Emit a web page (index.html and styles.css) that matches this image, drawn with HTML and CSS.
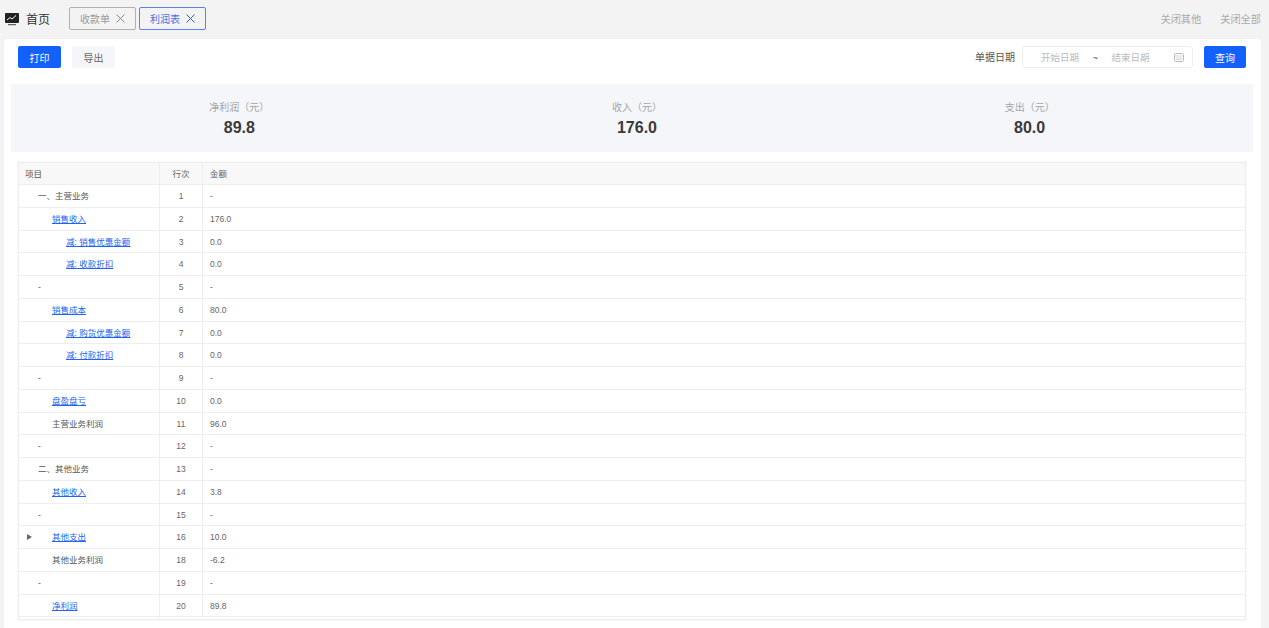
FILE: index.html
```html
<!DOCTYPE html>
<html lang="zh-CN">
  <head>
    <meta charset="UTF-8" />
    <title>利润表</title>
    <link rel="stylesheet" href="styles.css">
  </head>
  <body>
    <header class="tabs">
      <svg class="home-icon" width="14" height="14" viewBox="0 0 14 14">
        <rect x="0" y="1" width="14" height="10" rx="1" fill="#222" />
        <path d="M2 8 L5 5.5 L7 7 L11 3.5" fill="none" stroke="#fff" stroke-width="1" />
        <rect x="3" y="12.2" width="8" height="1" fill="#444" />
      </svg>
      <span class="home-title">首页</span>
      <div class="tab">收款单
        <svg class="tab-x" width="9" height="9" viewBox="0 0 9 9"><path d="M0.5 0.5 L8.5 8.5 M8.5 0.5 L0.5 8.5" /></svg>
      </div>
      <div class="tab on">利润表
        <svg class="tab-x" width="9" height="9" viewBox="0 0 9 9"><path d="M0.5 0.5 L8.5 8.5 M8.5 0.5 L0.5 8.5" /></svg>
      </div>
      <div class="tabs-right">
        <span>关闭其他</span>
        <span>关闭全部</span>
      </div>
    </header>

    <main class="card">
      <div class="toolbar">
        <button class="btn primary">打印</button>
        <button class="btn">导出</button>
        <label class="date-label">单据日期</label>
        <div class="date-range">
          <span>开始日期</span>
          <span class="tilde">~</span>
          <span>结束日期</span>
          <svg class="cal" width="10" height="10" viewBox="0 0 10 10">
            <rect x="0.5" y="1.5" width="9" height="8" rx="1" fill="none" stroke="#bbb" />
            <path d="M0.5 4 H9.5 M2 6 H8 M2 7.7 H8" stroke="#ccc" stroke-width="0.8" />
          </svg>
        </div>
        <button class="btn primary search">查询</button>
      </div>

      <section class="stats">
        <div class="stat"><p>净利润（元）</p><b>89.8</b></div>
        <div class="stat"><p>收入（元）</p><b>176.0</b></div>
        <div class="stat"><p>支出（元）</p><b>80.0</b></div>
      </section>

      <div class="table-wrap">
        <div class="grid head">
          <div>项目</div><div class="c">行次</div><div>金额</div>
        </div>
        <div class="grid"><div class="l1">一、主营业务</div><div class="c">1</div><div>-</div></div>
        <div class="grid"><div class="l2"><a href="#">销售收入</a></div><div class="c">2</div><div>176.0</div></div>
        <div class="grid"><div class="l3"><a href="#">减: 销售优惠金额</a></div><div class="c">3</div><div>0.0</div></div>
        <div class="grid"><div class="l3"><a href="#">减: 收款折扣</a></div><div class="c">4</div><div>0.0</div></div>
        <div class="grid"><div class="l1">-</div><div class="c">5</div><div>-</div></div>
        <div class="grid"><div class="l2"><a href="#">销售成本</a></div><div class="c">6</div><div>80.0</div></div>
        <div class="grid"><div class="l3"><a href="#">减: 购货优惠金额</a></div><div class="c">7</div><div>0.0</div></div>
        <div class="grid"><div class="l3"><a href="#">减: 付款折扣</a></div><div class="c">8</div><div>0.0</div></div>
        <div class="grid"><div class="l1">-</div><div class="c">9</div><div>-</div></div>
        <div class="grid"><div class="l2"><a href="#">盘盈盘亏</a></div><div class="c">10</div><div>0.0</div></div>
        <div class="grid"><div class="l2">主营业务利润</div><div class="c">11</div><div>96.0</div></div>
        <div class="grid"><div class="l1">-</div><div class="c">12</div><div>-</div></div>
        <div class="grid"><div class="l1">二、其他业务</div><div class="c">13</div><div>-</div></div>
        <div class="grid"><div class="l2"><a href="#">其他收入</a></div><div class="c">14</div><div>3.8</div></div>
        <div class="grid"><div class="l1">-</div><div class="c">15</div><div>-</div></div>
        <div class="grid"><div class="l2 has-arrow"><i class="arrow"></i><a href="#">其他支出</a></div><div class="c">16</div><div>10.0</div></div>
        <div class="grid"><div class="l2">其他业务利润</div><div class="c">18</div><div>-6.2</div></div>
        <div class="grid"><div class="l1">-</div><div class="c">19</div><div>-</div></div>
        <div class="grid"><div class="l2"><a href="#">净利润</a></div><div class="c">20</div><div>89.8</div></div>
      </div>
    </main>
  </body>
</html>
```

FILE: styles.css
```css
* {
  margin: 0;
  padding: 0;
  box-sizing: border-box;
}
html,
body {
  height: 628px;
  overflow: hidden;
}
body {
  background: #f3f3f3;
  font-family: "Liberation Sans", "Noto Sans CJK SC", sans-serif;
  font-size: 8.5px;
  color: #555;
}
.tabs {
  height: 39px;
  display: flex;
  align-items: center;
  padding: 0 8px 2px 5px;
}
.home-icon {
  flex: none;
}
.home-title {
  margin-left: 7px;
  margin-right: 20px;
  font-size: 12px;
  color: #333;
}
.tab {
  height: 23px;
  width: 67px;
  margin-right: 3px;
  margin-left: -1px;
  display: flex;
  align-items: center;
  justify-content: space-between;
  padding: 0 10px;
  border: 1px solid #b0b0b0;
  border-radius: 2px;
  font-size: 10px;
  color: #999;
}
.tab + .tab {
  margin-left: 0;
}
.tab.on {
  border-color: #5b82ec;
  color: #4a6fe0;
}
.tab-x {
  fill: none;
  stroke: #888;
  stroke-width: 1;
}
.tab.on .tab-x {
  stroke: #2f5fd8;
}
.tabs-right {
  margin-left: auto;
  display: flex;
  gap: 19px;
  padding-bottom: 1px;
  font-size: 10.2px;
  color: #aaa;
}
.card {
  margin: 0 8px 0 4px;
  height: 589px;
  background: #fff;
  border-radius: 4px 4px 0 0;
  padding: 0 8px 0 7px;
}
.toolbar {
  height: 45px;
  display: flex;
  align-items: flex-start;
  padding: 7px 7px 0;
}
.btn {
  height: 22px;
  width: 43px;
  margin-right: 11px;
  border: 0;
  border-radius: 2px;
  background: #f5f6fa;
  color: #666;
  font: inherit;
  font-size: 10px;
}
.btn.primary {
  background: #1360fb;
  color: #fff;
}
.toolbar .search {
  width: 42px;
  margin-right: 0;
}
.date-label {
  margin-left: auto;
  margin-right: 7px;
  font-size: 10px;
  line-height: 23px;
  color: #555;
}
.date-range {
  width: 171px;
  height: 22px;
  margin-right: 11px;
  display: flex;
  align-items: center;
  padding: 0 8px 0 18px;
  border: 1px solid #eee;
  border-radius: 3px;
  font-size: 9.5px;
  color: #bbb;
}
.tilde {
  margin: 0 13.5px;
  color: #555;
}
.cal {
  margin-left: auto;
}
.stats {
  height: 68px;
  display: flex;
  justify-content: space-around;
  align-items: center;
  padding: 1px 27px 0;
  background: #f5f6fa;
}
.stat {
  text-align: center;
}
.stat p {
  font-size: 10px;
  line-height: 14px;
  color: #a5a5a5;
}
.stat b {
  display: block;
  margin-top: 3px;
  font-size: 16px;
  line-height: 19px;
  color: #3a3a3a;
}
.table-wrap {
  margin: 10px 7px 0;
  height: 458px;
  border: 1px solid #eee;
  box-shadow: 0 0 1px #ddd;
}
.grid {
  display: grid;
  grid-template-columns: 141px 43px 1fr;
  height: 22.75px;
  border-bottom: 1px solid #eee;
  line-height: 23px;
}
.grid > div {
  padding-left: 6px;
  border-right: 1px solid #eee;
  white-space: nowrap;
}
.grid > div:last-child {
  padding-left: 7px;
  border-right: 0;
  color: #666;
}
.grid > .c {
  padding-left: 0;
  text-align: center;
  color: #666;
}
.head {
  height: 22px;
  background: #f8f8f8;
  line-height: 22px;
}
.grid > .l1 {
  padding-left: 19px;
}
.grid > .l2 {
  padding-left: 33px;
}
.grid > .l3 {
  padding-left: 47px;
}
.grid a {
  color: #2463ef;
}
.grid > .has-arrow {
  position: relative;
}
.arrow {
  position: absolute;
  left: 8px;
  top: 8px;
  border-left: 5px solid #666;
  border-top: 3px solid transparent;
  border-bottom: 3px solid transparent;
}
```
